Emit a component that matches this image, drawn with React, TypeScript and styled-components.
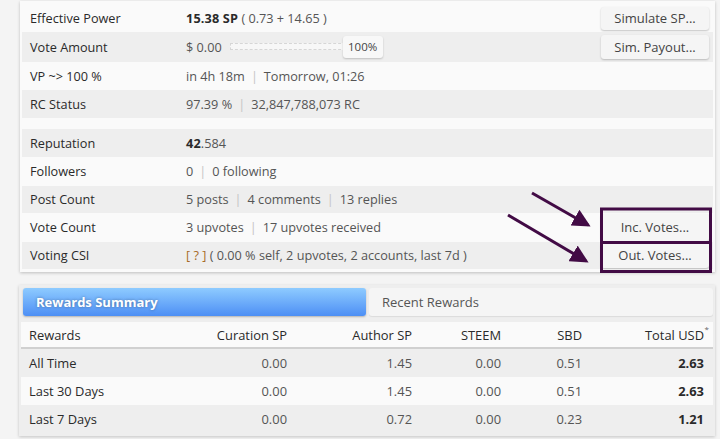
import React from "react";
import styled, { createGlobalStyle } from "styled-components";

const Global = createGlobalStyle`
  html, body { margin: 0; padding: 0; }
  body {
    background: #f4f4f4;
    font-family: "Open Sans", "DejaVu Sans", sans-serif;
    font-size: 12.7px;
    color: #333;
    width: 720px;
    height: 439px;
    overflow: hidden;
  }
`;

const Page = styled.div`
  position: relative;
  width: 720px;
  height: 439px;
  padding: 0 5px 0 20px;
  box-sizing: border-box;
`;

const Card = styled.div`
  margin-top: 1px;
  background: #fafafa;
  padding: 3px 2px 3px 2px;
  box-shadow: 0 1px 3px rgba(0, 0, 0, 0.22);
`;

const Group = styled.div`
  display: flex;
  flex-direction: column;
`;

const Spacer = styled.div`
  height: 11px;
`;

const Row = styled.div<{ $alt?: boolean; $h?: number }>`
  display: grid;
  grid-template-columns: 156px 1fr auto;
  align-items: center;
  height: ${(p) => p.$h ?? 28.5}px;
  padding: 0 4px 0 8px;
  background: ${(p) => (p.$alt ? "#eeeeee" : "#fafafa")};
`;

const Label = styled.div`
  color: #2a2a2a;
`;

const Value = styled.div`
  color: #555;
  display: flex;
  align-items: center;
  white-space: nowrap;
`;

const Strong = styled.b`
  color: #2a2a2a;
  font-weight: 700;
  letter-spacing: 0.15px;
`;

const Sep = styled.span`
  color: #c4c4c4;
  margin: 0 6px;
`;

const Help = styled.span`
  color: #a86b2a;
`;

const Button = styled.div<{ $h?: number }>`
  width: 108px;
  height: ${(p) => p.$h ?? 23}px;
  box-sizing: border-box;
  display: flex;
  align-items: center;
  justify-content: center;
  background: #f5f5f5;
  color: #444;
  font-size: 13px;
  border-radius: 3px;
  box-shadow: 0 1px 2px rgba(0, 0, 0, 0.22);
`;

const Track = styled.div`
  width: 114px;
  height: 5px;
  margin-left: 8px;
  border: 1px dashed #d6d6d6;
  background: #f7f7f7;
`;

const Percent = styled.div`
  width: 40px;
  height: 22px;
  margin-left: -3px;
  display: flex;
  align-items: center;
  justify-content: center;
  font-size: 11.5px;
  color: #444;
  background: #f8f8f8;
  border-radius: 3px;
  box-shadow: 0 1px 2px rgba(0, 0, 0, 0.2);
`;

const Panel = styled.div`
  margin-top: 13px;
  margin-left: -1px;
  background: #eeeeee;
  padding: 3px 2px 3px 3px;
  box-shadow: 0 1px 3px rgba(0, 0, 0, 0.2);
`;

const Tabs = styled.div`
  display: grid;
  grid-template-columns: 343px 1fr;
  gap: 3px;
  padding-left: 1px;
  margin-bottom: 6px;
`;

const Tab = styled.div<{ $active?: boolean }>`
  height: 28px;
  display: flex;
  align-items: center;
  padding-left: 13px;
  border-radius: 3px;
  font-size: 13px;
  font-weight: ${(p) => (p.$active ? 700 : 400)};
  color: ${(p) => (p.$active ? "#fff" : "#555")};
  text-shadow: ${(p) => (p.$active ? "0 0 3px rgba(0,0,0,0.35)" : "none")};
  background: ${(p) =>
    p.$active ? "linear-gradient(#8ecbff, #4d8ff5)" : "#f5f5f5"};
  box-shadow: ${(p) => (p.$active ? "0 1px 2px rgba(0,0,0,0.25)" : "0 1px 1px rgba(0,0,0,0.08)")};
`;

const TableRow = styled.div<{ $alt?: boolean; $head?: boolean }>`
  display: grid;
  grid-template-columns: 138px 120px 125px 89px 81px 122px;
  align-items: center;
  height: ${(p) => (p.$head ? 25 : 28)}px;
  padding: 0 8px;
  font-size: 12.9px;
  background: ${(p) => (p.$alt ? "#eeeeee" : "#fafafa")};
  border-bottom: ${(p) => (p.$head ? "2px solid #d0d0d0" : "none")};
  color: ${(p) => (p.$head ? "#2a2a2a" : "#555")};
  margin-left: -1px;
`;

const Cell = styled.div<{ $left?: boolean; $bold?: boolean }>`
  text-align: ${(p) => (p.$left ? "left" : "right")};
  color: ${(p) => (p.$left ? "#2a2a2a" : p.$bold ? "#2a2a2a" : "inherit")};
  font-weight: ${(p) => (p.$bold ? 700 : 400)};
  position: relative;
`;

const Star = styled.sup`
  position: absolute;
  right: -5px;
  top: -3px;
  font-size: 8px;
  color: #666;
`;

const Overlay = styled.svg`
  position: absolute;
  left: 0;
  top: 0;
  pointer-events: none;
`;

const rewards = [
  { name: "All Time", cur: "0.00", auth: "1.45", steem: "0.00", sbd: "0.51", usd: "2.63", alt: true },
  { name: "Last 30 Days", cur: "0.00", auth: "1.45", steem: "0.00", sbd: "0.51", usd: "2.63", alt: false },
  { name: "Last 7 Days", cur: "0.00", auth: "0.72", steem: "0.00", sbd: "0.23", usd: "1.21", alt: true },
];

const ANNO = "#420b45";

export default function App() {
  return (
    <>
      <Global />
      <Page>
        <Card>
          <Group>
            <Row $h={28}>
              <Label>Effective Power</Label>
              <Value>
                <Strong>15.38 SP</Strong>&nbsp;( 0.73 + 14.65 )
              </Value>
              <Button>Simulate SP...</Button>
            </Row>
            <Row $alt $h={29.5}>
              <Label>Vote Amount</Label>
              <Value>
                $ 0.00
                <Track />
                <Percent>100%</Percent>
              </Value>
              <Button $h={24}>Sim. Payout...</Button>
            </Row>
            <Row $h={28.5}>
              <Label>VP ~&gt; 100 %</Label>
              <Value>
                in 4h 18m<Sep>|</Sep>Tomorrow, 01:26
              </Value>
            </Row>
            <Row $alt $h={28}>
              <Label>RC Status</Label>
              <Value>
                97.39 %<Sep>|</Sep>32,847,788,073 RC
              </Value>
            </Row>
          </Group>
          <Spacer />
          <Group>
            <Row $alt $h={28}>
              <Label>Reputation</Label>
              <Value>
                <Strong>42</Strong>.584
              </Value>
            </Row>
            <Row $h={28.5}>
              <Label>Followers</Label>
              <Value>
                0<Sep>|</Sep>0 following
              </Value>
            </Row>
            <Row $alt $h={27.5}>
              <Label>Post Count</Label>
              <Value>
                5 posts<Sep>|</Sep>4 comments<Sep>|</Sep>13 replies
              </Value>
            </Row>
            <Row $h={28.5}>
              <Label>Vote Count</Label>
              <Value>
                3 upvotes<Sep>|</Sep>17 upvotes received
              </Value>
              <Button $h={27}>Inc. Votes...</Button>
            </Row>
            <Row $alt $h={27.5}>
              <Label>Voting CSI</Label>
              <Value>
                <Help>[ ? ]</Help>&nbsp;( 0.00 % self, 2 upvotes, 2 accounts, last 7d )
              </Value>
              <Button $h={26}>Out. Votes...</Button>
            </Row>
          </Group>
        </Card>

        <Panel>
          <Tabs>
            <Tab $active>Rewards Summary</Tab>
            <Tab>Recent Rewards</Tab>
          </Tabs>
          <TableRow $head>
            <Cell $left>Rewards</Cell>
            <Cell>Curation SP</Cell>
            <Cell>Author SP</Cell>
            <Cell>STEEM</Cell>
            <Cell>SBD</Cell>
            <Cell>
              Total USD<Star>*</Star>
            </Cell>
          </TableRow>
          {rewards.map((r) => (
            <TableRow key={r.name} $alt={r.alt}>
              <Cell $left>{r.name}</Cell>
              <Cell>{r.cur}</Cell>
              <Cell>{r.auth}</Cell>
              <Cell>{r.steem}</Cell>
              <Cell>{r.sbd}</Cell>
              <Cell $bold>{r.usd}</Cell>
            </TableRow>
          ))}
        </Panel>

        <Overlay width={720} height={439} viewBox="0 0 720 439">
          <defs>
            <marker id="ah" markerWidth="6" markerHeight="6" refX="5" refY="3" orient="auto" markerUnits="strokeWidth">
              <path d="M0,0 L6,3 L0,6 Z" fill={ANNO} />
            </marker>
          </defs>
          <rect x={601.5} y={208} width={109} height={33.5} fill="none" stroke={ANNO} strokeWidth={3} />
          <rect x={601.5} y={241.5} width={109} height={29} fill="none" stroke={ANNO} strokeWidth={3} />
          <line x1={532} y1={192} x2={588} y2={224} stroke={ANNO} strokeWidth={3} markerEnd="url(#ah)" />
          <line x1={508} y1={214} x2={586} y2={260} stroke={ANNO} strokeWidth={3} markerEnd="url(#ah)" />
        </Overlay>
      </Page>
    </>
  );
}
